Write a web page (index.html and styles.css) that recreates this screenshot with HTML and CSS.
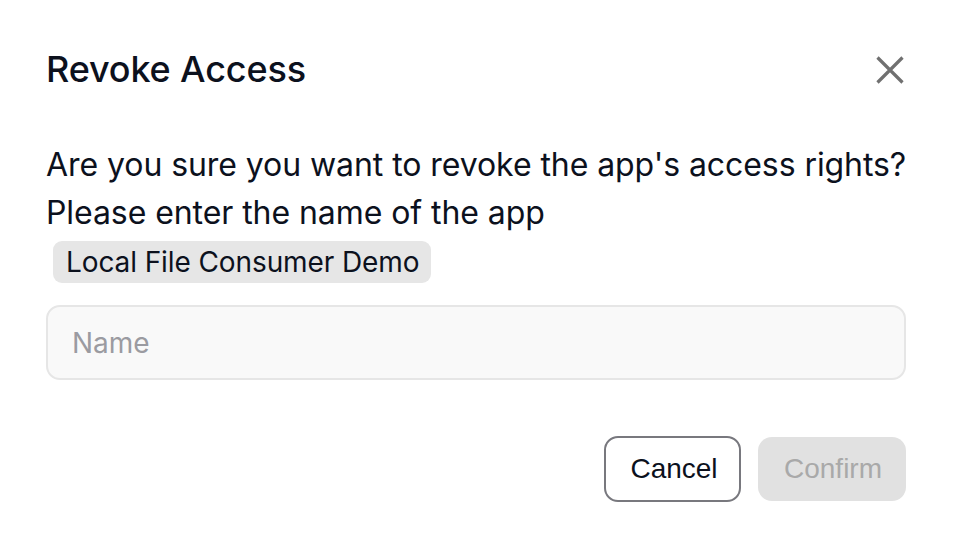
FILE: index.html
```html
<!DOCTYPE html>
<html lang="en">
<head>
<meta charset="utf-8">
<title>Revoke Access</title>
<link rel="stylesheet" href="styles.css">
</head>
<body>
<div class="dialog">
  <div class="header">
    <h1 class="title">Revoke Access</h1>
    <button class="close" aria-label="Close">
      <svg width="28" height="28" viewBox="0 0 28 28"><path d="M1.5 1.5 L26.5 26.5 M26.5 1.5 L1.5 26.5" stroke="#707070" stroke-width="3.2" fill="none"/></svg>
    </button>
  </div>
  <p class="message">Are you sure you want to revoke the app's access rights?<br>Please enter the name of the app</p>
  <span class="chip">Local File Consumer Demo</span>
  <input class="name-input" type="text" placeholder="Name">
  <div class="actions">
    <button class="btn btn-cancel">Cancel</button>
    <button class="btn btn-confirm" disabled>Confirm</button>
  </div>
</div>
</body>
</html>
```
FILE: styles.css
```css
html, body {
  margin: 0;
  padding: 0;
  background: #ffffff;
}
body {
  font-family: Inter, "Noto Sans", sans-serif;
  color: #0c111d;
}
.dialog {
  width: 954px;
  height: 534px;
  box-sizing: border-box;
  padding: 45px 48px 0 46px;
  display: flex;
  flex-direction: column;
}
.header {
  display: flex;
  align-items: center;
  justify-content: space-between;
  height: 48px;
}
.title {
  margin: 0;
  font-size: 36px;
  font-weight: 500;
  line-height: 48px;
  letter-spacing: -0.15px;
  color: #0c111d;
}
.close {
  border: none;
  background: none;
  padding: 0;
  margin: 2px 2px 0 0;
  width: 28px;
  height: 28px;
  display: flex;
}
.message {
  margin: 48px 0 0;
  font-size: 32px;
  line-height: 48px;
  letter-spacing: -0.07px;
  white-space: nowrap;
}
.chip {
  align-self: flex-start;
  margin: 4px 0 0 7px;
  padding: 0 12px 0 13px;
  height: 42px;
  line-height: 42px;
  font-size: 28px;
  letter-spacing: -0.1px;
  background: #e6e6e6;
  border-radius: 9px;
}
.name-input {
  margin-top: 22px;
  height: 75px;
  box-sizing: border-box;
  border: 2px solid #e6e6e6;
  border-radius: 14px;
  background: #f9f9f9;
  padding: 0 24px;
  font-family: Inter, "Noto Sans", sans-serif;
  font-size: 28px;
  color: #0c111d;
  outline: none;
}
.name-input::placeholder {
  color: #9b9ba1;
}
.actions {
  margin-top: 56px;
  display: flex;
  justify-content: flex-end;
  align-items: center;
  gap: 17px;
}
.btn {
  font-family: "Liberation Sans", Arial, sans-serif;
  font-size: 28px;
  border-radius: 14px;
  box-sizing: border-box;
  padding: 0;
}
.btn-cancel {
  width: 137px;
  height: 66px;
  padding-left: 3px;
  background: #ffffff;
  border: 2px solid #78787e;
  color: #0c111d;
}
.btn-confirm {
  width: 148px;
  height: 64px;
  padding-left: 2px;
  background: #e1e1e1;
  border: none;
  color: #a9a9a9;
}
```
